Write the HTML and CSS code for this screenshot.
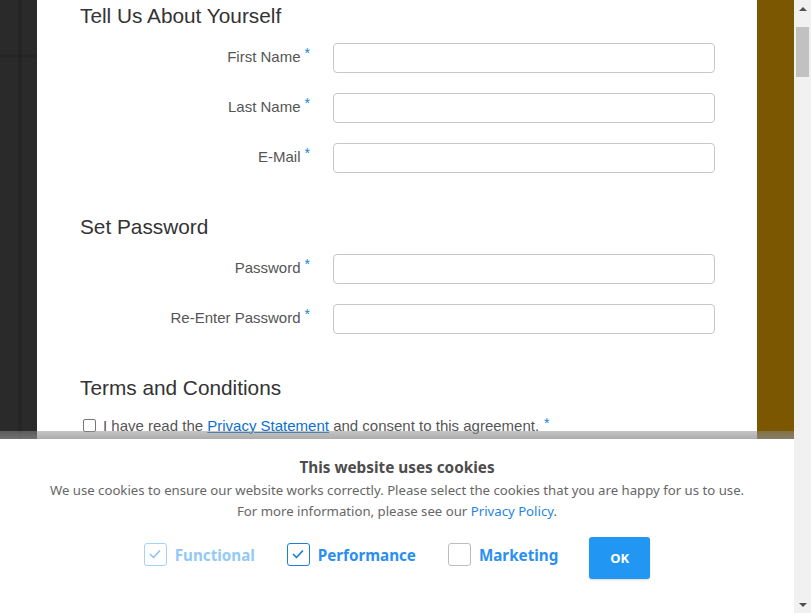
FILE: index.html
```html
<!DOCTYPE html>
<html>
<head>
<meta charset="utf-8">
<link rel="stylesheet" href="styles.css">
</head>
<body>
<div class="window">
  <div class="page">
    <div class="side side-left"></div>
    <main class="card">
      <h2 class="section-title first">Tell Us About Yourself</h2>
      <div class="row"><label class="label">First Name<span class="req">*</span></label><input class="field" type="text"></div>
      <div class="row"><label class="label">Last Name<span class="req">*</span></label><input class="field" type="text"></div>
      <div class="row"><label class="label">E-Mail<span class="req">*</span></label><input class="field" type="text"></div>

      <h2 class="section-title">Set Password</h2>
      <div class="row"><label class="label">Password<span class="req">*</span></label><input class="field" type="password"></div>
      <div class="row"><label class="label">Re-Enter Password<span class="req">*</span></label><input class="field" type="password"></div>

      <h2 class="section-title">Terms and Conditions</h2>
      <div class="terms"><span class="tbox"></span><span>I have read the <a href="#" class="plink">Privacy Statement</a> and consent to this agreement.</span><span class="req">*</span></div>
    </main>
    <div class="side side-right"></div>

    <div class="cookie">
      <div class="cookie-title">This website uses cookies</div>
      <p class="cookie-text">We use cookies to ensure our website works correctly. Please select the cookies that you are happy for us to use.<br>For more information, please see our <a href="#" class="clink">Privacy Policy</a>.</p>
      <div class="choices">
        <div class="choice disabled"><span class="cbox"><svg viewBox="0 0 22 22" width="22" height="22"><path d="M6.5 11.5l3 3 6-6.5" fill="none" stroke="currentColor" stroke-width="1.7" stroke-linecap="round" stroke-linejoin="round"/></svg></span><span class="clabel">Functional</span></div>
        <div class="choice checked"><span class="cbox"><svg viewBox="0 0 22 22" width="22" height="22"><path d="M6.5 11.5l3 3 6-6.5" fill="none" stroke="currentColor" stroke-width="1.7" stroke-linecap="round" stroke-linejoin="round"/></svg></span><span class="clabel">Performance</span></div>
        <div class="choice"><span class="cbox"></span><span class="clabel">Marketing</span></div>
        <button class="ok">OK</button>
      </div>
    </div>
  </div>
  <div class="scrollbar">
    <div class="arrow up"></div>
    <div class="thumb"></div>
    <div class="spacer"></div>
    <div class="arrow down"></div>
  </div>
</div>
</body>
</html>
```
FILE: styles.css
```css
* { box-sizing: border-box; }
html, body { margin: 0; padding: 0; overflow: hidden; }
body { font-family: "Liberation Sans", Arial, sans-serif; }

.window { display: flex; width: 811px; height: 613px; }
.page {
  position: relative;
  width: 794px;
  height: 613px;
  display: grid;
  grid-template-columns: 37px 720px 37px;
  overflow: hidden;
}
.side-left {
  background-color: #2a2a2a;
  background-image:
    linear-gradient(90deg, transparent 18px, rgba(0,0,0,0.12) 18px, rgba(0,0,0,0.12) 22px, transparent 22px),
    linear-gradient(180deg, transparent 54px, rgba(0,0,0,0.1) 54px, rgba(0,0,0,0.1) 58px, transparent 58px);
}
.side-right { background: #7a5700; }

.card { background: #fff; padding: 4px 0 0 43px; }

.section-title {
  margin: 42px 0 15px;
  font-size: 20.8px;
  line-height: 24px;
  font-weight: normal;
  color: #333;
}
.section-title.first { margin-top: 0; }

.row { display: flex; align-items: center; height: 30px; margin-bottom: 20px; }
.label {
  width: 253px;
  padding-right: 23px;
  padding-bottom: 3px;
  text-align: right;
  font-size: 15px;
  color: #555;
}
.req {
  color: #1a84d6;
  font-size: 14px;
  position: relative;
  top: -4px;
  margin-left: 4px;
}
.field {
  width: 382px;
  height: 30px;
  border: 1px solid #c7c7c7;
  border-radius: 4px;
  background: #fff;
  padding: 0 8px;
  font-size: 15px;
  outline: none;
}

.terms {
  display: flex;
  align-items: center;
  height: 20px;
  padding-left: 3px;
  font-size: 15px;
  color: #555;
}
.tbox {
  width: 13px;
  height: 13px;
  border: 1px solid #767676;
  border-radius: 2px;
  margin-right: 7px;
  flex: none;
}
.plink { color: #0a6fd0; text-decoration: underline; }
.terms .req { top: -2px; margin-left: 5px; }

.cookie {
  position: absolute;
  left: 0;
  right: 0;
  top: 439px;
  bottom: 0;
  background: #fff;
  text-align: center;
  font-family: "Noto Sans", "Open Sans", sans-serif;
  padding-top: 18px;
}
.cookie::before {
  content: "";
  position: absolute;
  left: 0;
  right: 0;
  top: -8px;
  height: 8px;
  background: linear-gradient(180deg, rgba(140,140,140,0.5), rgba(140,140,140,0.72));
}
.cookie-title {
  font-size: 15.3px;
  font-weight: bold;
  color: #4d4d4d;
  line-height: 20px;
}
.cookie-text {
  margin: 3px 0 0;
  font-size: 13.2px;
  line-height: 21px;
  color: #666;
}
.clink { color: #1f86e0; text-decoration: none; }

.choices {
  display: flex;
  justify-content: center;
  align-items: center;
  gap: 32px;
  margin-top: 8px;
}
.choice { display: flex; align-items: center; gap: 8px; }
.cbox {
  width: 23px;
  height: 23px;
  border: 1px solid #bdbdbd;
  border-radius: 3px;
  color: #1e7ed8;
  display: flex;
}
.cbox svg { display: block; margin: -1px; }
.choice.checked .cbox { border-color: #1e7ed8; }
.choice.disabled .cbox { border-color: #a6d2f7; color: #8ec4f3; }
.clabel { font-size: 15.2px; font-weight: bold; color: #2a8ff0; }
.choice.disabled .clabel { color: #93c9f7; }
.ok {
  width: 61px;
  height: 42px;
  margin-left: -1px;
  margin-top: 7px;
  border: none;
  border-radius: 3px;
  background: #2196f3;
  color: #fff;
  font-family: "Noto Sans", "Open Sans", sans-serif;
  font-size: 13px;
  font-weight: bold;
  box-shadow: 0 1px 2px rgba(0,0,0,0.15);
}

.scrollbar {
  width: 17px;
  height: 613px;
  background: #f1f1f1;
  display: flex;
  flex-direction: column;
  align-items: center;
}
.arrow { width: 17px; height: 17px; display: flex; align-items: center; justify-content: center; flex: none; }
.arrow::before {
  content: "";
  border-left: 4px solid transparent;
  border-right: 4px solid transparent;
}
.arrow.up::before { border-bottom: 4px solid #505050; }
.arrow.down::before { border-top: 4px solid #505050; }
.thumb { width: 13px; height: 50px; margin-top: 10px; background: #c1c1c1; flex: none; }
.spacer { flex: 1; }
```
